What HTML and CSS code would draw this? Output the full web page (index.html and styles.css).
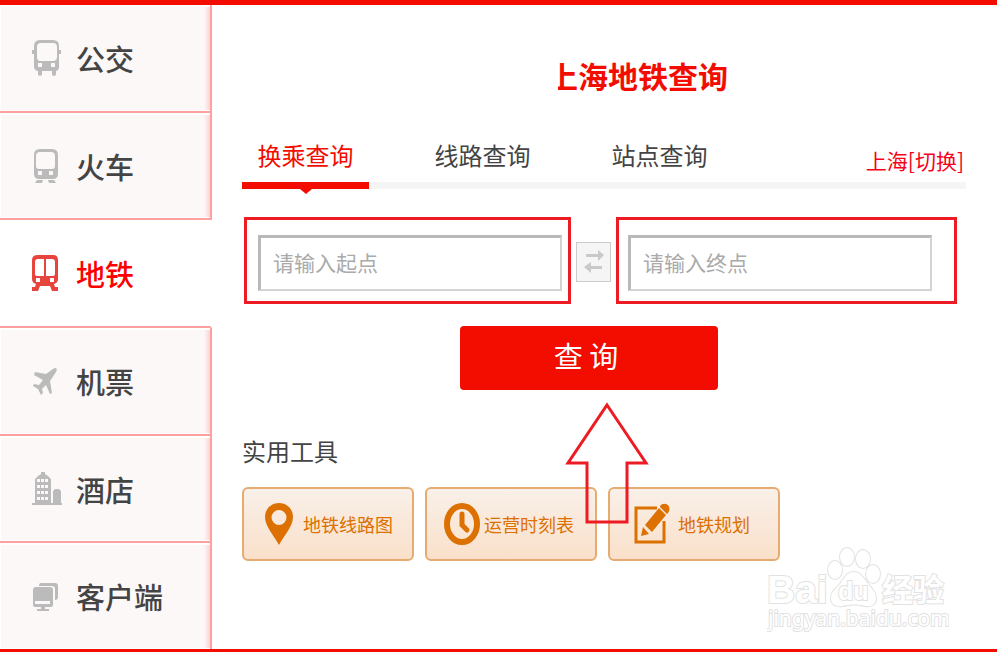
FILE: index.html
```html
<!DOCTYPE html>
<html lang="zh-CN">
<head>
    <meta charset="UTF-8">
    <meta name="viewport" content="width=device-width, initial-scale=1.0">
    <title>上海地铁查询</title>
    <link rel="stylesheet" href="styles.css">
</head>
<body>
    <div class="page">
        <nav class="sidebar">
            <a class="side-item" href="#">
                <svg class="side-icon" viewBox="0 0 30 36">
                    <path fill="#bbb" fill-rule="evenodd" d="M8 0h13q6 0 6 6v4h2v4h-2v13q0 3-3 4v3q0 2-2 2t-2-2v-3h-10v3q0 2-2 2t-2-2v-3q-4-1-4-4V14H0v-4h2V6q0-6 6-6zM9 3Q5 3 5 7v10q0 4 3 4h13q4 0 4-4V7q0-4-4-4zM6 23v4h4v-4zM19 23v4h4v-4z"/>
                </svg>
                <span>公交</span>
            </a>
            <a class="side-item" href="#">
                <svg class="side-icon" viewBox="0 0 30 36">
                    <path fill="#bbb" fill-rule="evenodd" d="M8 1h12q6 0 6 6v19q0 5-5 5H7q-5 0-5-5V7q0-6 6-6zM8 4Q4 4 4 8v10q0 3 3 3h13q3 0 3-3V8q0-4-4-4zM6 23v4h4v-4zM17 23v4h4v-4zM5 32h6l-1 3H3zM16 32h6l2 3h-7z"/>
                </svg>
                <span>火车</span>
            </a>
            <a class="side-item active" href="#">
                <svg class="side-icon" viewBox="0 0 30 36">
                    <path fill="#e6443c" fill-rule="evenodd" d="M6 0h15q5 0 5 5v19q0 4-4 5l1 3h3v4h-6l-2-5H8l-2 5H0v-4h3l1-3q-4-1-4-5V5q0-5 6-5zM6 4Q3 4 3 7v12q0 2 3 2h6V4zM14 4v17h6q3 0 3-2V7q0-3-3-3zM4 23v4h4v-4zM18 23v4h4v-4z"/>
                </svg>
                <span>地铁</span>
            </a>
            <a class="side-item" href="#">
                <svg class="side-icon" viewBox="0 0 30 36">
                    <path fill="#bbb" d="M23 5q3 0 1 4l-6 9 2 12-2 1-4-9-4 4 1 4-2 2-3-6-5-3 1-2 5 1 4-5-9-5 1-3 11 2 7-5z"/>
                </svg>
                <span>机票</span>
            </a>
            <a class="side-item" href="#">
                <svg class="side-icon" viewBox="0 0 30 36">
                    <path fill="#bbb" fill-rule="evenodd" d="M0 32h3V8l3-3 3-2V1h4v2l3 2 3 3v24h2V20l2-2h4l2 2v12h1v2H0zM5 8v3h3V8zM9 8v3h3V8zM13 8v3h3V8zM5 14v3h3v-3zM9 14v3h3v-3zM13 14v3h3v-3zM5 20v3h3v-3zM9 20v3h3v-3zM13 20v3h3v-3zM5 26v3h3v-3zM9 26v3h3v-3zM13 26v3h3v-3z"/>
                </svg>
                <span>酒店</span>
            </a>
            <a class="side-item" href="#">
                <svg class="side-icon" viewBox="0 0 30 36">
                    <path fill="#bbb" fill-rule="evenodd" d="M9 5h14q3 0 3 3v11q0 3-3 3V11q0-3-3-3H7q0-3 2-3zM4 9h14q3 0 3 3v15q0 2-3 2h-5v2h4v2H5v-2h4v-2H4q-3 0-3-2V12q0-3 3-3zM3 23v3h15v-3z"/>
                </svg>
                <span>客户端</span>
            </a>
        </nav>

        <main class="content">
            <header class="heading">
                <h1 class="title">上海地铁查询</h1>
            </header>

            <div class="tab-bar">
                <div class="tabs">
                    <button class="tab current" type="button">换乘查询</button>
                    <button class="tab" type="button">线路查询</button>
                    <button class="tab" type="button">站点查询</button>
                </div>
                <a class="city" href="#">上海[切换]</a>
            </div>

            <form class="search">
                <div class="fields">
                    <div class="field field-from">
                        <input type="text" placeholder="请输入起点" aria-label="起点">
                    </div>
                    <button class="swap" type="button" aria-label="交换">
                        <svg viewBox="0 0 24 26" width="24" height="26">
                            <path fill="#c9c9c9" d="M4 5h12V1l6 5-6 6V8H4zM20 17v3H9v4l-7-6 7-5v4z"/>
                        </svg>
                    </button>
                    <div class="field field-to">
                        <input type="text" placeholder="请输入终点" aria-label="终点">
                    </div>
                </div>
                <div class="submit-row">
                    <button class="submit" type="submit">查 询</button>
                    <svg class="arrow" viewBox="0 0 84 124" width="84" height="124">
                        <path fill="none" stroke="#ed1c24" stroke-width="3" d="M42 4L81 62H62V121H22V62H3z"/>
                    </svg>
                </div>
            </form>

            <h2 class="tools-title">实用工具</h2>
            <div class="tools">
                <button class="tool tool-map" type="button">
                    <svg viewBox="0 0 28 44" width="28" height="44">
                        <path fill="#dc7000" fill-rule="evenodd" d="M14 1C6 1 0 7 0 15c0 9 9 19 14 28 5-9 14-19 14-28C28 7 22 1 14 1zM14 8a7 7 0 0 1 0 15a7 7 0 0 1 0-15z"/>
                    </svg>
                    <span>地铁线路图</span>
                </button>
                <button class="tool tool-time" type="button">
                    <svg viewBox="0 0 36 44" width="36" height="44">
                        <ellipse cx="18" cy="22" rx="15" ry="18" fill="none" stroke="#dc7000" stroke-width="6"/>
                        <path fill="none" stroke="#dc7000" stroke-width="5" stroke-linecap="round" d="M18 12v11l5 5"/>
                    </svg>
                    <span>运营时刻表</span>
                </button>
                <button class="tool tool-plan" type="button">
                    <svg viewBox="0 0 36 44" width="36" height="44">
                        <path fill="none" stroke="#dc7000" stroke-width="3" d="M23 6H2v34h28V19"/>
                        <path fill="#dc7000" d="M11 23L25 6l7 7-14 17zM9 25l6 7-8 2zM26 4q3-4 8-1 3 4 0 8l-1 1-7-7z"/>
                    </svg>
                    <span>地铁规划</span>
                </button>
            </div>
        </main>

        <svg class="watermark" viewBox="0 0 182 88" width="182" height="88">
            <g class="outline">
                <text class="wm-logo" x="0" y="56">Bai</text>
                <path d="M87 25c-8 0-10 7-14 12-5 5-9 8-9 14 0 8 7 9 12 8 7-2 15-2 22 0 6 1 11-1 11-8 0-6-4-9-8-14-5-6-7-12-14-12z"/>
                <ellipse cx="68" cy="23" rx="7" ry="9"/>
                <ellipse cx="80" cy="10" rx="7" ry="9"/>
                <ellipse cx="96" cy="12" rx="7" ry="9"/>
                <ellipse cx="106" cy="27" rx="7" ry="9"/>
                <text class="wm-du" x="71" y="53">du</text>
                <text class="wm-name" x="115" y="54">经验</text>
                <text class="wm-url" x="1" y="79">jingyan.baidu.com</text>
            </g>
        </svg>
    </div>
</body>
</html>
```
FILE: styles.css
```css
* {
    box-sizing: border-box;
}

body {
    margin: 0;
    padding-right: 3px;
    background-color: #fff;
    color: #444;
    font-family: "Noto Sans CJK SC", "Noto Sans", sans-serif;
}

.page {
    position: relative;
    display: flex;
    min-height: 100vh;
    border-top: 5px solid #f30c00;
    border-bottom: 3px solid #f30c00;
}

a {
    color: inherit;
    text-decoration: none;
}

button,
input {
    font-family: inherit;
    margin: 0;
}

button {
    border: none;
    cursor: pointer;
}

/* sidebar */
.sidebar {
    display: flex;
    flex-direction: column;
    width: 212px;
    flex-shrink: 0;
}

.side-item {
    display: flex;
    flex: 1;
    align-items: center;
    gap: 14px;
    padding-left: 32px;
    border-bottom: 2px solid #ffa0a0;
    border-right: 2px solid #ffa0a0;
    background: linear-gradient(to left, #ffd3d3, #fcf8f8 6px);
    box-shadow: inset 1px 2px 0 #fff, inset 0 -1px 0 #fff;
    font-size: 29px;
    font-weight: 500;
    line-height: 36px;
}

.side-item:last-child {
    border-bottom: none;
}

.side-item.active {
    background: #fff;
    border-right-color: #fff;
    box-shadow: none;
    color: #fe0000;
}

.side-icon {
    width: 30px;
    height: 36px;
}

/* main column */
.content {
    flex: 1;
    padding: 48px 31px 0 30px;
}

.heading {
    display: flex;
    justify-content: center;
    padding-left: 78px;
}

.title {
    margin: 0;
    overflow: hidden;
    color: #f30c00;
    font-size: 30px;
    font-weight: bold;
    line-height: 44px;
    text-indent: -10px;
}

.tab-bar {
    display: flex;
    justify-content: space-between;
    align-items: flex-start;
    margin-top: 38px;
    height: 54px;
    border-bottom: 7px solid #f5f5f5;
}

.tabs {
    display: flex;
    gap: 50px;
}

.tab {
    position: relative;
    min-width: 127px;
    height: 54px;
    padding: 0 0 8px;
    border-bottom: 7px solid transparent;
    background: none;
    color: #444;
    font-size: 24px;
    line-height: 34px;
}

.tab.current {
    border-bottom-color: #f30c00;
    color: #f30c00;
}

.tab.current::after {
    content: "";
    position: absolute;
    left: 50%;
    bottom: -12px;
    margin-left: -6px;
    border: 6px solid transparent;
    border-top: 5px solid #f30c00;
    border-bottom: none;
}

.city {
    margin-top: 9px;
    padding-right: 2px;
    color: #f80018;
    font-size: 21px;
    line-height: 32px;
}

/* search form */
.fields {
    display: flex;
    align-items: center;
    gap: 5px;
    margin: 28px 9px 0 2px;
}

.field {
    padding: 15px 6px 10px 11px;
    border: 3px solid #ed1c24;
}

.field-from {
    flex: 1 1 327px;
}

.field-to {
    flex: 1 1 341px;
    padding-right: 22px;
    padding-left: 9px;
}

.field input {
    display: block;
    width: 100%;
    height: 56px;
    padding: 0 12px 4px;
    border: 2px solid #d3d3d3;
    border-top: 3px solid #b9b9b9;
    border-left: 3px solid #b9b9b9;
    background-color: #fff;
    font-size: 21px;
}

.field input::placeholder {
    color: #aaa;
    opacity: 1;
}

.swap {
    display: flex;
    align-items: center;
    justify-content: center;
    flex-shrink: 0;
    width: 35px;
    height: 40px;
    margin-top: 3px;
    padding: 0;
    border: 1px solid #ccc;
    background-color: #f5f5f5;
}

.submit-row {
    position: relative;
    display: flex;
    justify-content: center;
    margin-top: 22px;
    padding-right: 30px;
}

.submit {
    width: 258px;
    height: 64px;
    padding: 0 6px 6px 0;
    border-radius: 4px;
    background-color: #f30c00;
    color: #fff;
    font-size: 29px;
}

/* arrow pointing up at the submit button */
.arrow {
    position: absolute;
    top: 75px;
    left: 50%;
    margin-left: -39px;
    z-index: 2;
}

/* tools */
.tools-title {
    margin: 43px 0 0;
    font-size: 24px;
    font-weight: normal;
    line-height: 36px;
}

.tools {
    display: flex;
    gap: 11px;
    margin-top: 18px;
}

.tool {
    display: flex;
    align-items: center;
    width: 172px;
    height: 74px;
    padding: 0 0 0 21px;
    border: 2px solid #e5ab70;
    border-radius: 6px;
    background: linear-gradient(#f9f0e9, #fae0ca);
    color: #dc7000;
    font-size: 18px;
}

.tool-map {
    gap: 10px;
}

.tool-time {
    gap: 4px;
    padding-left: 17px;
}

.tool-plan {
    gap: 8px;
    padding-left: 24px;
}

/* watermark */
.watermark {
    position: absolute;
    right: 48px;
    bottom: 14px;
}

.outline {
    fill: #fff;
    stroke: #e2e2e2;
    stroke-width: 2;
    paint-order: stroke;
}

.wm-logo {
    font: bold 39px "Liberation Sans", sans-serif;
}

.wm-du {
    font: bold 25px "Liberation Sans", sans-serif;
}

.wm-name {
    font: bold 31px "Noto Sans CJK SC", sans-serif;
}

.wm-url {
    font: 21px "Noto Sans", sans-serif;
}
```
